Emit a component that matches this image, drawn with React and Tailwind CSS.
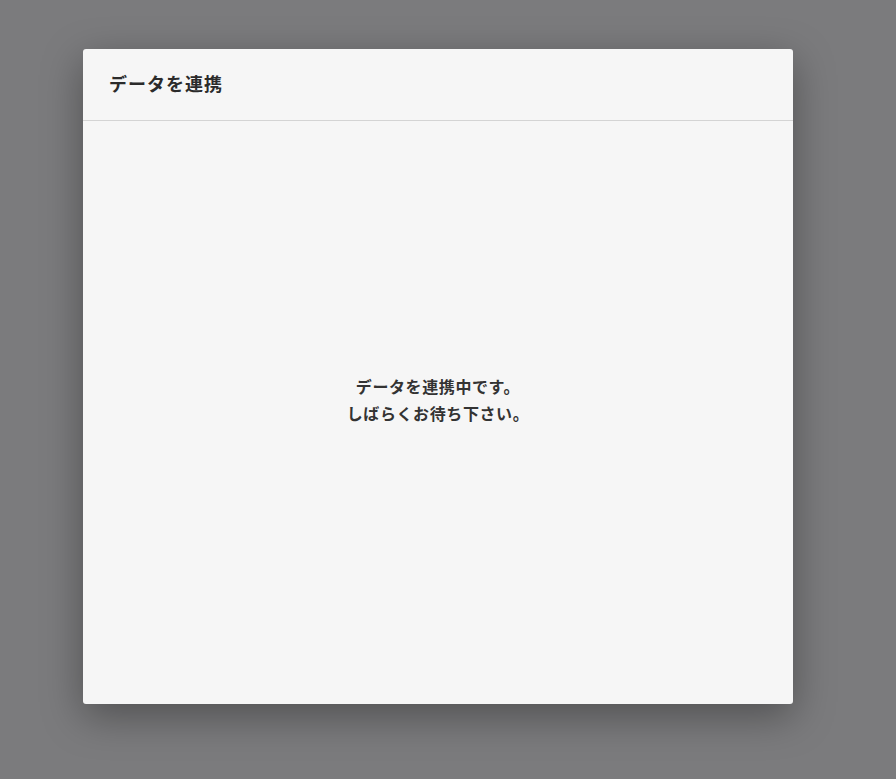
export default function App() {
  return (
    <div
      className="h-[779px] w-full bg-[#7b7b7d] pl-[83px] pt-[49px]"
      style={{ fontFamily: '"Noto Sans CJK JP", "Noto Sans", sans-serif' }}
    >
      <div className="flex h-[655px] w-[710px] flex-col rounded-[3px] bg-[#f6f6f6] shadow-[0_12px_40px_rgba(0,0,0,0.35)]">
        {/* Header */}
        <div className="flex h-[72px] shrink-0 items-center border-b border-[#d4d4d4] px-[26px] pb-[3px]">
          <h2 className="text-[18px] font-bold leading-none tracking-[1px] text-[#2b2b2b]">データを連携</h2>
        </div>

        {/* Body */}
        <div className="flex flex-1 items-center justify-center pb-[25px]">
          <p className="text-center text-[16px] font-bold leading-[27px] tracking-[0.6px] text-[#333333]">
            データを連携中です。
            <br />
            しばらくお待ち下さい。
          </p>
        </div>
      </div>
    </div>
  )
}
